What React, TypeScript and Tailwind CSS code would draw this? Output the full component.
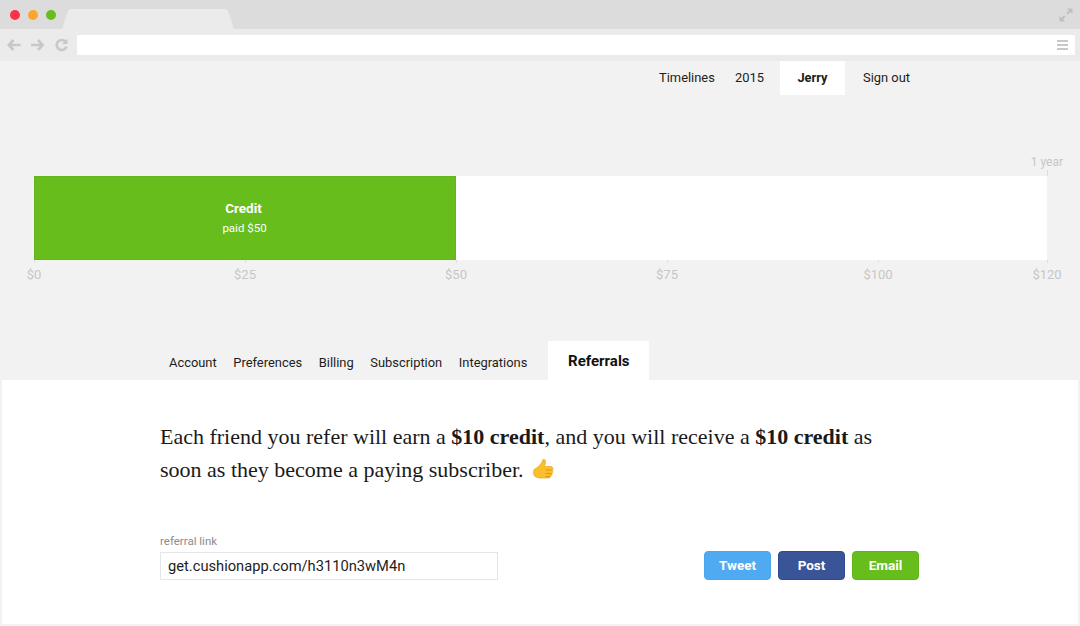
import React from "react";

const sans = "font-['Roboto','Noto_Sans',sans-serif]";

function Toolbar() {
  return (
    <div className="flex h-[32px] items-center bg-[#ebebeb] pl-[7px] pr-[5px]">
      <svg width="64" height="16" viewBox="0 0 64 16" fill="none" stroke="#c8c8c8" strokeWidth="2.600" className="shrink-0">
        <path d="M13.500 8H2M6.500 3 1.800 8l4.700 5" />
        <path d="M24 8h11.500M31 3l4.700 5-4.700 5" />
        <path d="M59.500 9.500a5 5 0 1 1-1.200-5" />
        <path d="M60.500 1.500v5.500h-5.500z" fill="#c8c8c8" stroke="none" />
      </svg>
      <div className="ml-[6px] flex h-[20px] flex-1 items-center justify-end rounded-[1px] bg-white pr-[7px]">
        <div className="flex w-[11px] flex-col gap-[2px]">
          <div className="h-[2px] bg-[#c8c8c8]" />
          <div className="h-[2px] bg-[#c8c8c8]" />
          <div className="h-[2px] bg-[#c8c8c8]" />
        </div>
      </div>
    </div>
  );
}

function TitleBar() {
  return (
    <div className="relative flex h-[29px] items-center bg-[#dcdcdc] pl-[10px] pr-[7px]">
      <div className="flex gap-[8px]">
        <div className="h-[10px] w-[10px] rounded-full bg-[#fc3347]" />
        <div className="h-[10px] w-[10px] rounded-full bg-[#fda52f]" />
        <div className="h-[10px] w-[10px] rounded-full bg-[#67bd1f]" />
      </div>
      <svg width="174" height="21" viewBox="0 0 174 21" className="absolute left-[62px] top-[8px]">
        <path d="M0 21 6 3Q7 1 9 1H163Q165 1 166 3L172 21Z" fill="#ebebeb" />
      </svg>
      <svg width="14" height="14" viewBox="0 0 14 14" className="ml-auto" fill="#c0c0c0">
        <path d="M13.500 .5v5.500l-2-2-2.500 2.500-1.500-1.500L10 2.500l-2-2z" />
        <path d="M.5 13.500V8l2 2L5 7.500 6.500 9 4 11.500l2 2z" />
      </svg>
    </div>
  );
}

function TopNav() {
  return (
    <div className={`flex h-[34px] pl-[649px] text-[12.900px] leading-[33px] text-[#1d1d1d] ${sans}`}>
      <span className="w-[74px] pl-[10px]">Timelines</span>
      <span className="w-[57px] pl-[12px]">2015</span>
      <span className="w-[65px] bg-white text-center font-bold">Jerry</span>
      <span className="pl-[18px]">Sign out</span>
    </div>
  );
}

const ticks: [string, string][] = [
  ["$0", "w-[211px]"],
  ["$25", "w-[211px]"],
  ["$50", "w-[211px]"],
  ["$75", "w-[211px]"],
  ["$100", "w-[169px]"],
  ["$120", "w-0"],
];

function Chart() {
  return (
    <div className={`ml-[34px] mt-[56px] w-[1014px] ${sans}`}>
      <div className="relative flex h-[25px] justify-end">
        <span className="mr-[-15px] mt-[3px] text-[12px] leading-[16px] text-[#c6c6c6]">1 year</span>
        <div className="absolute bottom-0 left-[1013px] h-[6px] w-px bg-[#dedede]" />
      </div>
      <div className="flex h-[84px] w-[1013px] bg-white">
        <div className="flex w-[422px] flex-col items-center border border-[#62b51c] bg-[#66bd1c] text-white">
          <span className="mr-[3px] mt-[22px] text-[13.500px] font-bold leading-[18px]">Credit</span>
          <span className="mr-[1px] mt-[4px] text-[11.500px] leading-[15px]">paid $50</span>
        </div>
      </div>
      <div className="flex h-[20px]">
        {ticks.map(([label, width]) => (
          <div key={label} className={`relative h-[3px] shrink-0 ${width} border-l border-[#dedede]`}>
            <span className="absolute left-[-21px] top-[7px] w-[40px] text-center text-[13px] leading-[16px] text-[#c6c6c6]">
              {label}
            </span>
          </div>
        ))}
      </div>
    </div>
  );
}

function Tabs() {
  return (
    <div className={`mt-[61px] flex h-[39px] items-end pl-[169px] text-[12.900px] text-[#1d1d1d] ${sans}`}>
      <div className="flex h-[34px] items-center gap-[16.600px]">
        <span>Account</span>
        <span>Preferences</span>
        <span>Billing</span>
        <span>Subscription</span>
        <span>Integrations</span>
      </div>
      <div className="ml-[21px] flex h-[39px] w-[101px] items-center justify-center bg-white pt-[2px] text-[15px] font-bold text-[#111]">
        Referrals
      </div>
    </div>
  );
}

function Thumb() {
  return (
    <svg width="21" height="20" viewBox="0 0 21 20" className="ml-[4px] inline-block align-[-2px]">
      <path d="M1 10.500 5 8 8.500 4 10 .5c2-.5 3 1 2.500 3L11.500 7.500H18c2 0 2.500 3 1.500 4 .5 1.500 0 2.500-.5 3 0 1.500-.5 2.500-1.500 3 0 1-1 1.500-2 1.500H8c-2.500 0-4-.5-5-1-1.500-.5-2.500-2.500-2.500-4z" fill="#fbbf2c" stroke="#eda51f" strokeWidth=".7" />
      <path d="M12.500 11h6.500M12.500 14.500h6M12.500 17.500h4.500" stroke="#dd9320" strokeWidth="1" fill="none" />
    </svg>
  );
}

function Panel() {
  return (
    <div className="mx-[2px] flex h-[244px] flex-col bg-white pl-[158px] pr-[159px]">
      <p className="mt-[40px] w-[740px] font-['Liberation_Serif',serif] text-[22px] leading-[33px] text-[#1a1a1a]">
        Each friend you refer will earn a <b>$10 credit</b>, and you will receive a <b>$10 credit</b> as soon as they become a paying subscriber.{" "}
        <Thumb />
      </p>
      <div className={`mt-[47px] flex items-end justify-between ${sans}`}>
        <div className="flex flex-col">
          <span className="text-[11.500px] leading-[16px] text-[#8c8c8c]">referral link</span>
          <div className="mt-[3px] flex h-[28px] w-[338px] items-center border border-[#e6e6e6] pl-[7px] text-[14.700px] text-[#1d1d1d]">
            get.cushionapp.com/h3110n3wM4n
          </div>
        </div>
        <div className="flex gap-[7px] text-[13.500px] font-bold text-white">
          <span className="flex h-[29px] w-[67px] items-center justify-center rounded-[4px] border border-[#4da6ea] bg-[#50aaf2]">Tweet</span>
          <span className="flex h-[29px] w-[67px] items-center justify-center rounded-[4px] border border-[#2f4a8e] bg-[#3a5498]">Post</span>
          <span className="flex h-[29px] w-[67px] items-center justify-center rounded-[4px] border border-[#5fb51a] bg-[#66bd1c]">Email</span>
        </div>
      </div>
    </div>
  );
}

export default function App() {
  return (
    <div className="h-[626px] w-[1080px] overflow-hidden bg-[#f2f2f2]">
      <TitleBar />
      <Toolbar />
      <TopNav />
      <Chart />
      <Tabs />
      <Panel />
    </div>
  );
}
